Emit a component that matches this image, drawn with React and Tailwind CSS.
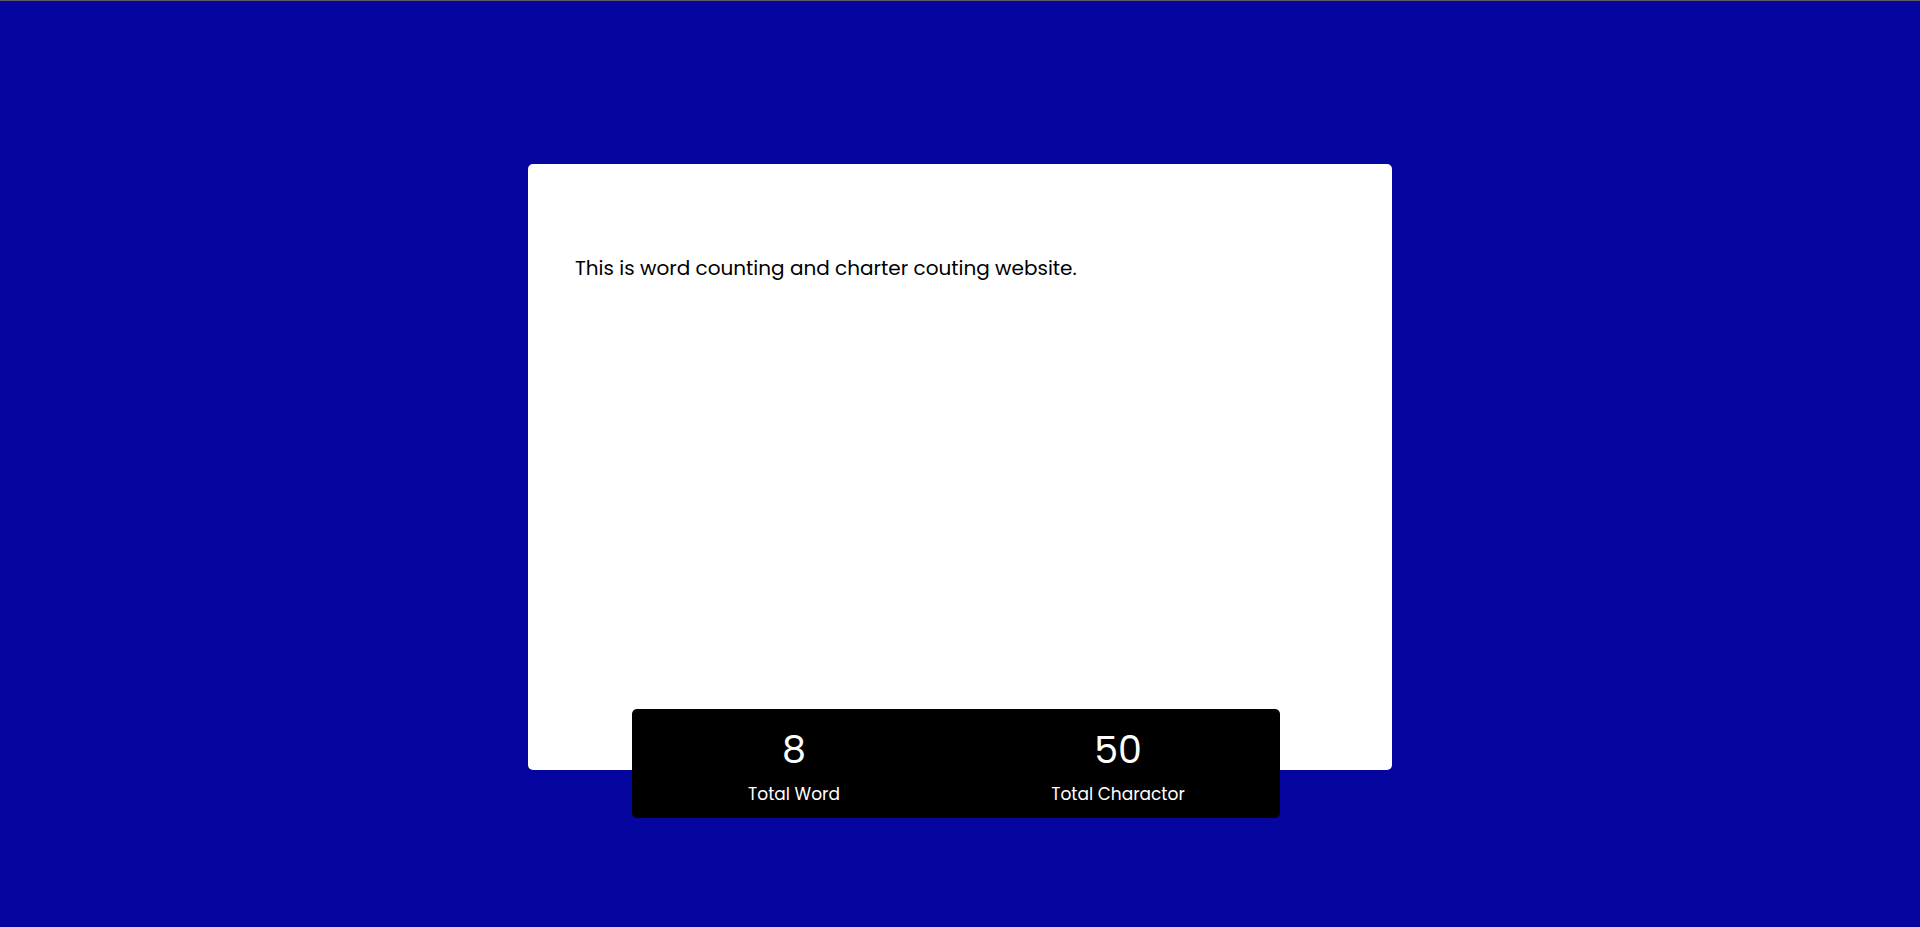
export default function App() {
  return (
    <div
      className="w-full h-[927px] bg-[#0505a0] border-t border-[#5a5a6a] flex flex-col items-center"
      style={{ fontFamily: '"Poppins", "Inter", "Noto Sans", sans-serif' }}
    >
      <div className="relative mt-[163px] w-[864px] h-[606px] bg-white rounded-[5px]">
        <div className="pl-[47px] pt-[90px] pr-[47px] text-[20px] leading-[28px] text-black">
          This is word counting and charter couting website.
        </div>
        <div className="absolute left-[104px] top-[545px] w-[648px] h-[109px] bg-black rounded-[5px] grid grid-cols-2 text-white">
          <div className="flex flex-col items-center pt-[18px]">
            <div className="text-[38px] leading-[46px]">8</div>
            <div className="text-[17px] leading-[24px] mt-[9px]">Total Word</div>
          </div>
          <div className="flex flex-col items-center pt-[18px]">
            <div className="text-[38px] leading-[46px]">50</div>
            <div className="text-[17px] leading-[24px] mt-[9px]">Total Charactor</div>
          </div>
        </div>
      </div>
    </div>
  );
}
